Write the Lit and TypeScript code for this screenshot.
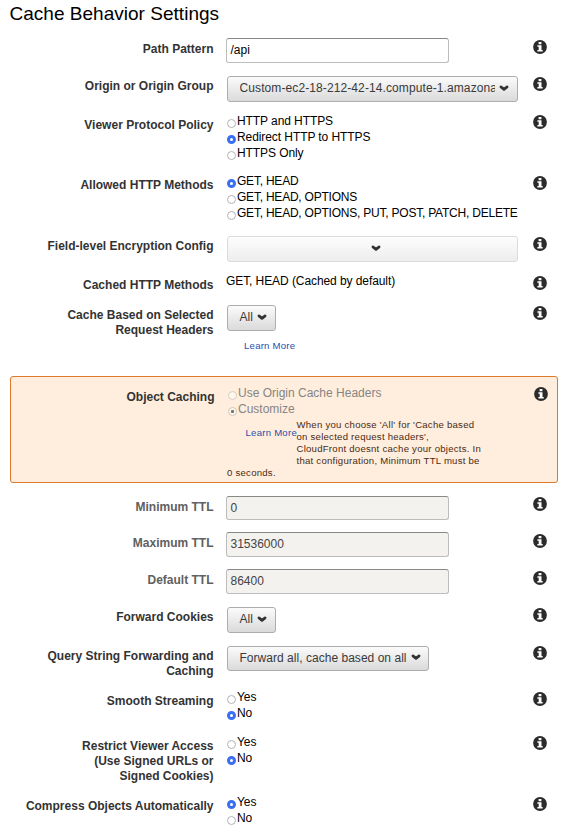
import { LitElement, html, css, svg, nothing } from "lit";
import { customElement, property } from "lit/decorators.js";
import { classMap } from "lit/directives/class-map.js";

interface Option {
  text: string;
  checked?: boolean;
}

interface Row {
  label: string[];
  kind: "input" | "select" | "radio" | "text";
  value?: string;
  options?: Option[];
  size?: "wide" | "small" | "medium";
  disabled?: boolean;
  learnMore?: boolean;
  extra?: string;
  caps?: boolean;
  high?: boolean;
}

const yesNo = (yes: boolean): Option[] => [
  { text: "Yes", checked: yes },
  { text: "No", checked: !yes },
];

const BEFORE: Row[] = [
  { label: ["Path Pattern"], kind: "input", value: "/api" },
  {
    label: ["Origin or Origin Group"],
    kind: "select",
    size: "wide",
    value: "Custom-ec2-18-212-42-14.compute-1.amazona",
  },
  {
    label: ["Viewer Protocol Policy"],
    kind: "radio",
    high: true,
    options: [
      { text: "HTTP and HTTPS" },
      { text: "Redirect HTTP to HTTPS", checked: true },
      { text: "HTTPS Only" },
    ],
  },
  {
    label: ["Allowed HTTP Methods"],
    kind: "radio",
    extra: "loose",
    caps: true,
    options: [
      { text: "GET, HEAD", checked: true },
      { text: "GET, HEAD, OPTIONS" },
      { text: "GET, HEAD, OPTIONS, PUT, POST, PATCH, DELETE" },
    ],
  },
  { label: ["Field-level Encryption Config"], kind: "select", size: "wide", value: "", disabled: true },
  { label: ["Cached HTTP Methods"], kind: "text", value: "GET, HEAD (Cached by default)" },
  {
    label: ["Cache Based on Selected", "Request Headers"],
    kind: "select",
    size: "small",
    value: "All",
    learnMore: true,
  },
];

const AFTER: Row[] = [
  { label: ["Minimum TTL"], kind: "input", value: "0", disabled: true, extra: "tight", high: true },
  { label: ["Maximum TTL"], kind: "input", value: "31536000", disabled: true },
  { label: ["Default TTL"], kind: "input", value: "86400", disabled: true },
  { label: ["Forward Cookies"], kind: "select", size: "small", value: "All" },
  {
    label: ["Query String Forwarding and", "Caching"],
    kind: "select",
    size: "medium",
    high: true,
    value: "Forward all, cache based on all",
  },
  { label: ["Smooth Streaming"], kind: "radio", options: yesNo(false), extra: "loose" },
  {
    label: ["Restrict Viewer Access", "(Use Signed URLs or", "Signed Cookies)"],
    kind: "radio",
    high: true,
    options: yesNo(false),
  },
  { label: ["Compress Objects Automatically"], kind: "radio", options: yesNo(true) },
];

const infoIcon = html`<svg class="info" viewBox="0 0 14 14" aria-label="Info">
  ${svg`<circle cx="7" cy="7" r="6.9" fill="#2b2b2b" />
  <path d="M5.6 2.1h2.8v2.1H5.6z M4.4 5.2h4.1v4.8h1.2v1.6H4.4V10h1.3V6.7H4.4z" fill="#fff" />`}
</svg>`;

const chevron = html`<svg class="chevron" viewBox="0 0 10 7">
  <path d="M1.9 1.9 L5 4.4 L8.1 1.9" fill="none" stroke="#333" stroke-width="2.7" stroke-linecap="round" stroke-linejoin="round" />
</svg>`;

@customElement("setting-row")
export class SettingRow extends LitElement {
  @property({ attribute: false }) row!: Row;

  static styles = css`
    :host {
      display: block;
    }
    .row {
      display: grid;
      grid-template-columns: 213.5px 294.5px 1fr;
      column-gap: 12.5px;
      align-items: start;
    }
    .label {
      padding: 5.5px 0 9.5px;
      font-weight: bold;
      font-size: 12px;
      line-height: 15px;
      text-align: right;
      color: #333;
      white-space: nowrap;
    }
    .row.input.disabled .label {
      color: #606060;
    }
    .line {
      display: block;
    }
    .info {
      display: block;
      width: 14px;
      height: 14px;
      margin-top: 4px;
    }
    .high .info {
      margin-top: 3px;
    }
    .field {
      font-size: 12px;
      white-space: nowrap;
      color: #000;
      letter-spacing: -0.08px;
    }
    .caps .field {
      letter-spacing: -0.22px;
    }
    .input .field {
      padding: 2px 0 10px;
      letter-spacing: 0;
    }
    .box {
      box-sizing: border-box;
      width: 223px;
      height: 25px;
      padding: 0 3.5px;
      border: 1px solid #bcbcbc;
      border-top-color: #888;
      border-radius: 3px;
      line-height: 22px;
      background: #fff;
    }
    .tight .box {
      height: 24px;
    }
    .disabled .box {
      background: #f3f2ee;
      color: #444;
    }
    .select .field {
      padding: 3px 0 10px 1px;
      letter-spacing: 0;
    }
    .button {
      box-sizing: border-box;
      display: flex;
      align-items: center;
      gap: 4px;
      height: 26px;
      padding: 0 8px 2px 11.5px;
      border: 1px solid #adadad;
      border-radius: 3px;
      background: linear-gradient(#fbfbfb, #dadada);
      color: #3a3a3a;
    }
    .wide .button {
      width: 291px;
    }
    .small .button {
      width: 49px;
    }
    .medium .button {
      width: 202px;
      height: 25px;
      margin-bottom: 1px;
    }
    .value {
      flex: 1;
      overflow: hidden;
    }
    .wide .value {
      letter-spacing: 0.1px;
    }
    .small .value,
    .medium .value {
      overflow: visible;
    }
    .medium .value {
      letter-spacing: 0.03px;
    }
    .disabled .button {
      justify-content: center;
      padding: 0 0 2px 7px;
      border-color: #dcdcdc;
      background: linear-gradient(#fdfdfd, #ededed);
    }
    .chevron {
      flex: none;
      width: 10px;
      height: 7px;
    }
    .learn {
      display: block;
      margin: 9px 0 0 17px;
      font-size: 9.6px;
      letter-spacing: 0.23px;
      line-height: 12px;
      color: #1f4fae;
    }
    .radio .field {
      padding: 1px 0 11px 1px;
    }
    .radio.loose .field {
      padding-bottom: 12px;
    }
    .option {
      display: flex;
      gap: 1px;
      height: 16px;
      line-height: 16px;
    }
    .dot {
      box-sizing: border-box;
      width: 9px;
      height: 9px;
      margin-top: 6px;
      border: 1px solid #b3b3b3;
      border-radius: 50%;
      background: #fff;
    }
    .dot.on {
      border: 3px solid #3b6ff2;
    }
    .radio.disabled .option {
      color: #858585;
      letter-spacing: 0;
    }
    .disabled .dot {
      border-color: #d8d0c6;
      background: #fff6ec;
    }
    .disabled .dot.on {
      border: 1px solid #cfc7bd;
      background: radial-gradient(circle, #777 1.3px, #fff6ec 1.9px);
    }
    .text .field {
      padding: 1px 0 0;
      line-height: 16px;
    }
  `;

  private field(row: Row) {
    switch (row.kind) {
      case "input":
        return html`<div class="box">${row.value}</div>`;
      case "select":
        return html`<div class="button">
            ${row.value ? html`<span class="value">${row.value}</span>` : nothing}${chevron}
          </div>
          ${row.learnMore ? html`<span class="learn">Learn More</span>` : nothing}`;
      case "radio":
        return html`${row.options!.map(
          (o) => html`<div class="option">
            <span class=${classMap({ dot: true, on: !!o.checked })}></span><span>${o.text}</span>
          </div>`
        )}<slot></slot>`;
      default:
        return row.value;
    }
  }

  render() {
    const row = this.row;
    const classes = {
      row: true,
      [row.kind]: true,
      disabled: !!row.disabled,
      caps: !!row.caps,
      high: !!row.high,
      [row.size ?? "auto"]: true,
      [row.extra ?? "normal"]: true,
    };
    return html`<div class=${classMap(classes)}>
      <div class="label">${row.label.map((l) => html`<span class="line">${l}</span>`)}</div>
      <div class="field">${this.field(row)}</div>
      ${infoIcon}
    </div>`;
  }
}

@customElement("app-root")
export class AppRoot extends LitElement {
  static styles = css`
    :host {
      display: block;
      box-sizing: border-box;
      width: 569px;
      height: 834px;
      overflow: hidden;
      background: #fff;
      font-family: "Liberation Sans", Arial, Helvetica, sans-serif;
    }
    h1 {
      margin: 0;
      padding: 3px 0 0 9.5px;
      height: 33px;
      font-size: 19px;
      font-weight: normal;
      line-height: 22px;
      color: #000;
      white-space: nowrap;
      letter-spacing: 0.02px;
    }
    .alert {
      box-sizing: border-box;
      width: 548px;
      height: 107px;
      margin: 14px 0 11px 10px;
      padding-top: 7px;
      border: 1px solid #dd7a2a;
      border-radius: 3px;
      background: #ffeedd;
    }
    .alert setting-row {
      margin-left: -10px;
    }
    .notice {
      margin-left: -1px;
      font-size: 9.6px;
      line-height: 12px;
      letter-spacing: 0.24px;
      color: #4b2a12;
    }
    .top {
      display: flex;
      margin-top: 2px;
    }
    .learn {
      flex: none;
      width: 51px;
      margin: 8px 0 0 18.5px;
      color: #1f4fae;
    }
  `;

  render() {
    const caching: Row = {
      label: ["Object Caching"],
      kind: "radio",
      disabled: true,
      high: true,
      options: [{ text: "Use Origin Cache Headers" }, { text: "Customize", checked: true }],
    };
    return html`
      <h1>Cache Behavior Settings</h1>
      ${BEFORE.map((row) => html`<setting-row .row=${row}></setting-row>`)}
      <section class="alert">
        <setting-row .row=${caching}>
          <div class="notice">
            <div class="top">
              <span class="learn">Learn More</span>
              <span>
                When you choose 'All' for 'Cache based<br />on selected request headers',<br />CloudFront
                doesnt cache your objects. In<br />that configuration, Minimum TTL must be
              </span>
            </div>
            0 seconds.
          </div>
        </setting-row>
      </section>
      ${AFTER.map((row) => html`<setting-row .row=${row}></setting-row>`)}
    `;
  }
}
